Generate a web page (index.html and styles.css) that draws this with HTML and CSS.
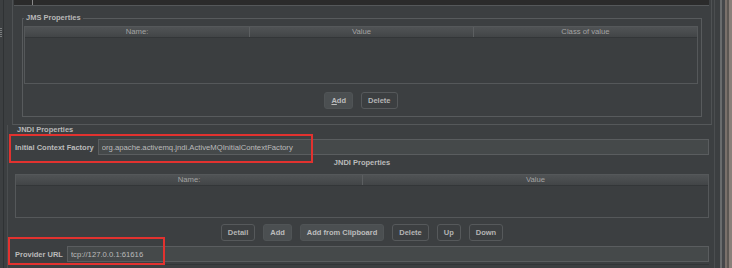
FILE: index.html
```html
<!DOCTYPE html>
<html lang="en">
<head>
  <meta charset="UTF-8">
  <meta name="viewport" content="width=device-width, initial-scale=1.0">
  <title>JMS Point-to-Point</title>
  <link rel="stylesheet" href="styles.css">
</head>
<body>
  <div class="app">
    <div class="gutter"><div class="grip"></div></div>

    <div class="main">
      <!-- JMS properties panel -->
      <div class="top-panel">
        <div class="editor-strip"></div>
        <fieldset class="group">
          <legend>JMS Properties</legend>
          <div class="table cols-3">
            <div class="thead">
              <div>Name:</div>
              <div>Value</div>
              <div>Class of value</div>
            </div>
            <div class="tbody tall"></div>
          </div>
          <div class="btn-row">
            <button class="btn primary"><u>A</u>dd</button>
            <button class="btn">Delete</button>
          </div>
        </fieldset>
      </div>

      <!-- JNDI properties -->
      <section class="jndi">
        <h3 class="section-title">JNDI Properties</h3>

        <div class="field-row icf">
          <label for="icf">Initial Context Factory</label>
          <input type="text" id="icf" value="org.apache.activemq.jndi.ActiveMQInitialContextFactory" readonly>
          <span class="mark"></span>
        </div>

        <div class="sub-title">JNDI Properties</div>
        <div class="table cols-2">
          <div class="thead">
            <div>Name:</div>
            <div>Value</div>
          </div>
          <div class="tbody short"></div>
        </div>
        <div class="btn-row">
          <button class="btn">Detail</button>
          <button class="btn primary">Add</button>
          <button class="btn primary">Add from Clipboard</button>
          <button class="btn">Delete</button>
          <button class="btn">Up</button>
          <button class="btn">Down</button>
        </div>

        <div class="field-row url">
          <label for="url">Provider URL</label>
          <input type="text" id="url" value="tcp://127.0.0.1:61616" readonly>
          <span class="mark"></span>
        </div>
        <div class="section-end"></div>
      </section>
    </div>

    <div class="edge"></div>
  </div>
</body>
</html>
```

FILE: styles.css
```css
body {
  margin: 0;
  background-color: #3c3f41;
  color: #bbbbbb;
  font-family: "Liberation Sans", Arial, sans-serif;
  overflow: hidden;
}
.app {
  display: flex;
  width: 732px;
  height: 268px;
}

/* left splitter */
.gutter {
  width: 7px;
  flex: none;
  background: linear-gradient(to right, transparent 3px, #2f3234 3px, #2f3234 4px, transparent 4px);
}
.grip {
  width: 2px;
  height: 9px;
  margin-top: 28px;
  background: repeating-linear-gradient(#7a7d7f 0 1px, transparent 1px 2px);
}

.main {
  width: 707px;
  flex: none;
  border-right: 1px solid #4b4e50;
}

/* top panel */
.top-panel {
  height: 125px;
  box-sizing: border-box;
  margin: 0 2px 0 5px;
  border-left: 1px solid #4f5254;
  border-right: 1px solid #4f5254;
  border-bottom: 1px solid #55585a;
  overflow: hidden;
}
.editor-strip {
  height: 5px;
  margin: 0 2px 0 1px;
  background: linear-gradient(to right, #2b2b2b 18px, #8a8a8a 18px, #8a8a8a 19px, #2b2b2b 19px);
  border-bottom: 1px solid #55585a;
}
.group {
  margin: 7px 9px 0 9px;
  padding: 3px 3px 7px 1px;
  border: 1px solid #585b5d;
  min-width: 0;
}
.group legend {
  padding: 0 2px;
  font-size: 7.5px;
  font-weight: bold;
  line-height: 10px;
  color: #b8b8b8;
}

/* tables */
.table {
  border: 1px solid #55585a;
}
.thead {
  display: grid;
  height: 10px;
  background: linear-gradient(#505355, #424547);
  border-bottom: 1px solid #333638;
  box-sizing: content-box;
}
.cols-3 .thead { grid-template-columns: 1fr 1fr 1fr; }
.cols-2 .thead { grid-template-columns: 1fr 1fr; }
.thead div {
  font-size: 7.7px;
  line-height: 10px;
  color: #a3a3a3;
  text-align: center;
}
.thead div + div {
  border-left: 1px solid #5c5f61;
}
.tbody {
  background-color: #3b3e40;
}
.tbody.tall { height: 45px; }
.tbody.short { height: 31px; }

/* buttons */
.btn-row {
  display: flex;
  justify-content: center;
  gap: 8px;
  margin-top: 8px;
}
.btn {
  height: 17px;
  padding: 0 6px;
  font-family: "Liberation Sans", Arial, sans-serif;
  font-size: 7.5px;
  font-weight: bold;
  color: #b4b4b4;
  background-color: #3c3f41;
  border: 1px solid #56595b;
  border-radius: 3px;
}
.btn.primary {
  background-color: #4b4f51;
  border-color: #505456;
  color: #bdbdbd;
}
.btn u {
  text-decoration-thickness: 1px;
}

/* JNDI section */
.jndi {
  height: 143px;
  padding: 0 5px 0 7px;
  border-left: 1px solid #4b4e50;
}
.section-title {
  margin: 0 0 0 2px;
  font-size: 7.5px;
  font-weight: bold;
  line-height: 10px;
  color: #b8b8b8;
}
.field-row {
  position: relative;
  display: flex;
  align-items: center;
  gap: 4px;
  height: 16px;
  margin-top: 4px;
}
.field-row label {
  font-size: 7.5px;
  font-weight: bold;
  color: #bbbbbb;
  white-space: nowrap;
}
.field-row input {
  flex: 1;
  min-width: 0;
  height: 16px;
  box-sizing: border-box;
  padding: 0 3px;
  font-family: "Liberation Sans", Arial, sans-serif;
  font-size: 7.7px;
  color: #bbbbbb;
  background-color: #45494a;
  border: 1px solid #5a5d5f;
  outline: none;
}
.field-row.url {
  margin-top: 5px;
}

/* red annotation boxes */
.mark {
  position: absolute;
  box-sizing: border-box;
  border: 2px solid #e2322f;
  pointer-events: none;
}
.icf .mark {
  left: -6px;
  top: -5px;
  width: 304px;
  height: 29px;
}
.url .mark {
  left: -7px;
  top: -9px;
  width: 157px;
  height: 28px;
}

.sub-title {
  margin-top: 3px;
  font-size: 7.5px;
  font-weight: bold;
  line-height: 10px;
  text-align: center;
}
.cols-2 {
  margin-top: 6px;
}
.jndi .btn-row {
  margin-top: 6px;
}
.section-end {
  margin-top: 2px;
  border-top: 1px solid #323537;
}

/* right window edge */
.edge {
  flex: 1;
  background: linear-gradient(to right,
    #3c3f41 5px, #6a6c6d 5px, #6a6c6d 7px, #45474a 7px, #45474a 10px,
    #7a706a 10px, #7a706a 12px, #5c5753 12px, #5c5753 14px, #8a807a 14px);
}
```
